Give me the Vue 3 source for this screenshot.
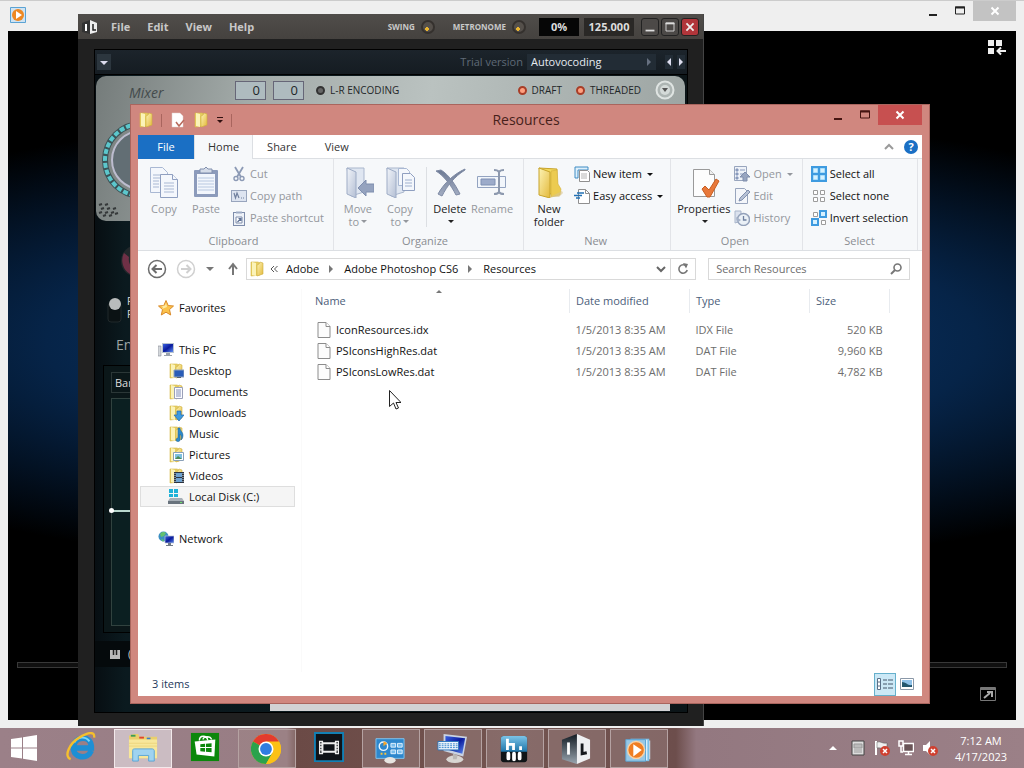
<script setup>
import { ref } from 'vue'

const activeTab = ref('Home')
const search = ref('')
const tabs = ['Home', 'Share', 'View']

const tree = [
  { name: 'Favorites', icon: 'star' },
  { name: 'This PC', icon: 'pc', gap: true },
  { name: 'Desktop', icon: 'desktop', child: true },
  { name: 'Documents', icon: 'documents', child: true },
  { name: 'Downloads', icon: 'downloads', child: true },
  { name: 'Music', icon: 'music', child: true },
  { name: 'Pictures', icon: 'pictures', child: true },
  { name: 'Videos', icon: 'videos', child: true },
  { name: 'Local Disk (C:)', icon: 'disk', child: true, selected: true },
  { name: 'Network', icon: 'network', gap: true }
]

const files = [
  { name: 'IconResources.idx', date: '1/5/2013 8:35 AM', type: 'IDX File', size: '520 KB' },
  { name: 'PSIconsHighRes.dat', date: '1/5/2013 8:35 AM', type: 'DAT File', size: '9,960 KB' },
  { name: 'PSIconsLowRes.dat', date: '1/5/2013 8:35 AM', type: 'DAT File', size: '4,782 KB' }
]

const crumbs = ['Adobe', 'Adobe Photoshop CS6', 'Resources']

const apps = [
  { name: 'Internet Explorer', icon: 'ie' },
  { name: 'File Explorer', icon: 'explorer', state: 'active' },
  { name: 'Store', icon: 'store' },
  { name: 'Chrome', icon: 'chrome', state: 'open' },
  { name: 'Movie editor', icon: 'film', state: 'dark' },
  { name: 'Control Panel', icon: 'control', state: 'open' },
  { name: 'On-Screen Keyboard', icon: 'keyboard', state: 'open' },
  { name: 'Mixer', icon: 'hw', state: 'open' },
  { name: 'Image Line', icon: 'il', state: 'open' },
  { name: 'Media Player', icon: 'wmp', state: 'open' }
]
</script>

<template>
  <div class="screen">
    <svg class="sprite" aria-hidden="true">
      <defs>
        <linearGradient id="gFolder" x1="0" y1="0" x2="1" y2="1">
          <stop offset="0" stop-color="#fdf3b4" /><stop offset="1" stop-color="#e3b93c" />
        </linearGradient>
        <linearGradient id="gPale" x1="0" y1="0" x2="1" y2="1">
          <stop offset="0" stop-color="#f2f5fa" /><stop offset="1" stop-color="#b4bfd4" />
        </linearGradient>
        <linearGradient id="gDelete" x1="0" y1="0" x2="0" y2="1">
          <stop offset="0" stop-color="#6d7a94" /><stop offset="1" stop-color="#a3adc2" />
        </linearGradient>
        <linearGradient id="gBlue" x1="0" y1="0" x2="0" y2="1">
          <stop offset="0" stop-color="#7cc4e8" /><stop offset="1" stop-color="#1d74a8" />
        </linearGradient>
        <linearGradient id="gCube" x1="0" y1="0" x2="0" y2="1">
          <stop offset="0" stop-color="#111a22" /><stop offset="1" stop-color="#9aa6b0" />
        </linearGradient>
        <linearGradient id="gScreen" x1="0" y1="0" x2="1" y2="1">
          <stop offset="0" stop-color="#3a62e0" /><stop offset="0.5" stop-color="#0a1a9c" /><stop offset="1" stop-color="#5d8cf0" />
        </linearGradient>
      </defs>

      <symbol id="i-folder" viewBox="0 0 16 16">
        <path d="M2 1h7l2 1v12l-9 1z" fill="#e6cd62" stroke="#d6b94c" stroke-width=".6" />
        <path d="M3 1l4 1v13l-4-1z" fill="#fbf3b8" />
        <path d="M8 4l2-1 1-2 3 1v11l-6 2z" fill="url(#gFolder)" stroke="#cfae3c" stroke-width=".6" />
      </symbol>
      <symbol id="i-open-folder" viewBox="0 0 32 32">
        <path d="M6 2l18 1v21l-10 6z" fill="#f3d95c" stroke="#c8a42c" />
        <path d="M18 5l6-1 1 14 3 5-1 6-9 2z" fill="#eccb50" stroke="#d3b03c" stroke-width=".6" />
        <path d="M6 2l11 4v26L6 29z" fill="url(#gFolder)" stroke="#c8a42c" />
        <path d="M17 31l6-3 6-3 1 2-4 4z" fill="#d9c48c" opacity=".6" />
      </symbol>
      <symbol id="i-file" viewBox="0 0 14 16">
        <path d="M1 .5h8l4 4v11H1z" fill="#fcfcfc" stroke="#8c8c8c" />
        <path d="M9 .5v4h4" fill="#fff" stroke="#8c8c8c" />
      </symbol>
      <symbol id="i-prop" viewBox="0 0 16 16">
        <path d="M2 1h8l3 3v11H2z" fill="#fff" stroke="#e3d0cc" stroke-width=".5" />
        <path d="M6 10l3 4 5-6" fill="none" stroke="#b86a5c" stroke-width="1.500" />
      </symbol>

      <symbol id="i-copy" viewBox="0 0 32 32">
        <g fill="#f4f7fc" stroke="#a9b8d3">
          <path d="M2.500 1.500h12l5 5v20h-17z" /><path d="M5 9h11M5 12h11M5 15h6M5 18h6M5 21h6" />
          <path d="M12.500 8.500h12l5 5v18h-17z" stroke="#8f9fc0" /><path d="M24.500 8.500v5h5" stroke="#8f9fc0" />
          <path d="M16 17h10M16 20h10M16 23h10M16 26h10" />
        </g>
      </symbol>
      <symbol id="i-paste" viewBox="0 0 32 32">
        <rect x="4" y="4" width="24" height="27" rx="1" fill="#8c9bbb" />
        <path d="M7 8h18v20H7z" fill="#f2f6fc" />
        <path d="M8 12h16M8 15h16M8 18h16M8 21h16M8 24h16" stroke="#b8c8e0" />
        <path d="M10 3h4l2-2 2 2h4v4H10z" fill="#d5dce8" stroke="#8190ae" />
      </symbol>
      <symbol id="i-cut" viewBox="0 0 16 16">
        <path d="M4 1l6 10M12 1L6 11" stroke="#8c9ab5" stroke-width="1.800" />
        <circle cx="5" cy="12.500" r="2" fill="none" stroke="#8c9ab5" stroke-width="1.400" />
        <circle cx="11" cy="12.500" r="2" fill="none" stroke="#8c9ab5" stroke-width="1.400" />
      </symbol>
      <symbol id="i-path" viewBox="0 0 16 16">
        <rect x=".5" y="2.500" width="15" height="11" fill="#dde4f0" stroke="#98a5bd" />
        <path d="M3 5l1.500 5L6 5l2 5M10 10h1M12 10h1" fill="none" stroke="#71809e" stroke-width="1.200" />
      </symbol>
      <symbol id="i-shortcut" viewBox="0 0 16 16">
        <rect x="2.500" y="2.500" width="11" height="13" fill="#eef2f8" stroke="#7e8dab" />
        <path d="M5 1.500h6v2H5z" fill="#9dabc4" />
        <path d="M5 7h6v6H5z" fill="#fff" stroke="#7e8dab" /><path d="M6.500 12l3-3M7.500 8.500h2.500V11" fill="none" stroke="#5d7196" stroke-width="1.200" />
      </symbol>
      <symbol id="i-move" viewBox="0 0 32 32">
        <path d="M5 2h17v24L9 30z" fill="#dfe6f1" stroke="#aab7cd" />
        <path d="M5 2l9 4v26l-9-4z" fill="url(#gPale)" stroke="#9eacc6" />
        <path d="M32 18h-8v-4l-8 8 8 8v-4h8z" fill="#95a3bf" stroke="#7f8eae" />
      </symbol>
      <symbol id="i-copyto" viewBox="0 0 32 32">
        <path d="M3 2h17v24L7 30z" fill="#dfe6f1" stroke="#aab7cd" />
        <path d="M3 2l9 4v26l-9-4z" fill="url(#gPale)" stroke="#9eacc6" />
        <path d="M14.500 2.500h8l3 3v14h-11z" fill="#f4f7fc" stroke="#a9b8d3" />
        <path d="M18.500 7.500h8l4 4v13h-12z" fill="#f4f7fc" stroke="#8f9fc0" />
        <path d="M21 14h7M21 17h7M21 20h7" stroke="#9fb0ce" />
      </symbol>
      <symbol id="i-delete" viewBox="0 0 32 32">
        <path d="M2 5l5-1c8 5 14 14 19 24l-4 1C17 19 10 10 2 5z" fill="url(#gDelete)" stroke="#7f8ba5" />
        <path d="M31 3C20 8 10 17 4 28l4 2C13 20 20 11 31 4z" fill="url(#gDelete)" stroke="#7f8ba5" />
      </symbol>
      <symbol id="i-rename" viewBox="0 0 32 32">
        <path d="M1.500 10.500h28v11h-28z" fill="#f2f6fb" stroke="#93a3c0" />
        <path d="M5 13h14v6H5z" fill="#9cabca" stroke="#7f90b3" />
        <path d="M18 4c2 0 4 0 5 2 1-2 3-2 5-2M23 6v20M18 28c2 0 4 0 5-2 1 2 3 2 5 2" fill="none" stroke="#8d99ae" stroke-width="2" />
      </symbol>
      <symbol id="i-newitem" viewBox="0 0 16 16">
        <path d="M1 1h13v3H4v8H1z" fill="#dff0fb" stroke="#3f8cc4" />
        <path d="M5.500 4.500h8l2 2v9h-10z" fill="#fff" stroke="#8f8f8f" />
        <path d="M7 8h6M7 10h6M7 12h6" stroke="#b5b5b5" />
      </symbol>
      <symbol id="i-easy" viewBox="0 0 16 16">
        <path d="M4.500 1.500h7l4 4v10h-11z" fill="#fff" stroke="#8f8f8f" /><path d="M11.500 1.500v4h4" fill="none" stroke="#8f8f8f" />
        <path d="M3 5h7M0 7.500h8M2 10h4" stroke="#2270b4" stroke-width="1.500" />
      </symbol>
      <symbol id="i-properties" viewBox="0 0 32 32">
        <path d="M5.500 3.500h16l5 5v22h-21z" fill="#fdfdfd" stroke="#9a9a9a" /><path d="M21.500 3.500v5h5" fill="#eee" stroke="#9a9a9a" />
        <path d="M14 23l3-3 4 4 7-11 3 2-9 16h-3z" fill="#e8783a" stroke="#c85e20" />
      </symbol>
      <symbol id="i-open" viewBox="0 0 16 16">
        <path d="M.5.500h12v14H.5z" fill="#eef2f8" stroke="#98a5bd" />
        <path d="M2 3h2v2H2zM6 4h5M2 7h2v2H2zM6 8h3M2 11h2v2H2z" fill="#8a9bbd" stroke="#8a9bbd" />
        <path d="M11 6l5 5h-3v4H9v-4H6z" fill="#97a5c0" stroke="#7e8dab" />
      </symbol>
      <symbol id="i-edit" viewBox="0 0 16 16">
        <path d="M1.500.500h9l3 3v12h-12z" fill="#f4f6fa" stroke="#98a5bd" />
        <path d="M5 13l1-3 8-8 2 2-8 8z" fill="#b6c1d5" stroke="#8190ae" />
      </symbol>
      <symbol id="i-history" viewBox="0 0 16 16">
        <path d="M1 1h6v10l-6 2z" fill="#dbe2ee" stroke="#aab6cb" />
        <circle cx="9.500" cy="9.500" r="6" fill="#eaf0f6" stroke="#93a1ba" stroke-width="1.500" />
        <path d="M9.500 6v4h3" fill="none" stroke="#6f80a0" stroke-width="1.300" /><path d="M2 7l1 6 4-3" fill="#a5b2c8" />
      </symbol>
      <symbol id="i-all" viewBox="0 0 16 16">
        <path d="M0 0h16v16H0z" fill="#3e9be0" />
        <path d="M2.500 2.500h4v4h-4zM9.500 2.500h4v4h-4zM2.500 9.500h4v4h-4zM9.500 9.500h4v4h-4z" fill="#d6f1ff" stroke="#a9defa" />
      </symbol>
      <symbol id="i-none" viewBox="0 0 16 16">
        <path d="M2.500 2.500h4v4h-4zM9.500 2.500h4v4h-4zM2.500 9.500h4v4h-4zM9.500 9.500h4v4h-4z" fill="#fff" stroke="#9c9c9c" />
      </symbol>
      <symbol id="i-invert" viewBox="0 0 16 16">
        <path d="M2.500 2.500h4v4h-4zM10.500 10.500h4v4h-4z" fill="#fff" stroke="#9c9c9c" />
        <path d="M9 1h6v6H9zM1 9h6v6H1z" fill="#d6f1ff" stroke="#3e9be0" stroke-width="2" />
      </symbol>

      <symbol id="i-star" viewBox="0 0 16 16">
        <path d="M8 .5l2.200 5 5.300.5-4 3.600 1.200 5.400L8 12.200 3.300 15l1.200-5.400L.5 6l5.300-.5z" fill="#fbc24a" stroke="#d98a2b" />
        <path d="M8 3l1 4-5 2 1-2-2-1 4-.5z" fill="#fde9a0" />
      </symbol>
      <symbol id="i-pc" viewBox="0 0 16 16">
        <path d="M0 4h3v10H0z" fill="#d4d8dc" stroke="#868c94" stroke-width=".6" />
        <path d="M4 1h12v10H4z" fill="#b9c4d0" /><path d="M5 2h10v8H5z" fill="url(#gScreen)" />
        <path d="M8 11h4v2h2v1H6v-1h2z" fill="#9ba3ad" />
      </symbol>
      <symbol id="i-desktop" viewBox="0 0 16 16">
        <use href="#i-folder" /><path d="M6 7h10v7H6z" fill="#2a5db8" stroke="#8fa2bd" /><path d="M9 14h4v1H9z" fill="#56606e" />
      </symbol>
      <symbol id="i-documents" viewBox="0 0 16 16">
        <use href="#i-folder" /><path d="M6.500 3.500h8v11h-8z" fill="#fbfbff" stroke="#9aa0b8" /><path d="M8 6h5M8 8h5M8 10h5M8 12h5" stroke="#8390b8" />
      </symbol>
      <symbol id="i-downloads" viewBox="0 0 16 16">
        <use href="#i-folder" /><path d="M9 6h4v4h3l-5 6-5-6h3z" fill="#3d9ae0" stroke="#2468ae" stroke-width=".7" />
      </symbol>
      <symbol id="i-music" viewBox="0 0 16 16">
        <use href="#i-folder" /><path d="M10 2h2c0 3 3 4 3 7s-1 4-2 5c1-3 0-5-1-6v6c0 2-4 2-4 0s2-2 2-2z" fill="#2b8acb" stroke="#1d5f96" stroke-width=".5" />
      </symbol>
      <symbol id="i-pictures" viewBox="0 0 16 16">
        <use href="#i-folder" /><path d="M5.500 5.500h10v8h-10z" fill="#fff" stroke="#8aa0b8" /><path d="M7 7h7v5H7z" fill="#7ec0e0" /><path d="M7 12l3-3 4 3z" fill="#4c8b56" />
      </symbol>
      <symbol id="i-videos" viewBox="0 0 16 16">
        <use href="#i-folder" /><path d="M6 4h10v11H6z" fill="#2c3440" /><path d="M8 5h6v4H8zM8 10h6v4H8z" fill="#6ea2d0" />
        <path d="M7 5v10M15 5v10" stroke="#d8dfe6" stroke-dasharray="1 1" />
      </symbol>
      <symbol id="i-disk" viewBox="0 0 16 16">
        <path d="M1 0h4v4H1zM6 0h4v4H6zM1 5h4v3H1zM6 5h4v3H6z" fill="#1fb2d8" />
        <path d="M2 9h12l2 3v3H0v-3z" fill="#a8b0b8" /><path d="M0 12h16v3H0z" fill="#69737d" /><path d="M12 13h2v1h-2z" fill="#6de06c" />
      </symbol>
      <symbol id="i-network" viewBox="0 0 16 16">
        <circle cx="5.500" cy="5.500" r="5" fill="#3a8fc2" /><path d="M2 3c2-3 5-2 6-1L6 5 3 6zM3 8l3 1-1 2z" fill="#63c070" />
        <path d="M7 5h9v7H7z" fill="url(#gScreen)" stroke="#b7c2ce" stroke-width=".7" /><path d="M10 12h3v2h2v1H8v-1h2z" fill="#707a86" />
      </symbol>

      <symbol id="i-start" viewBox="0 0 28 28">
        <path d="M1 5l11-1.600V13.500H1zM13 3.200L27 1v12.500H13zM1 14.500h11v10L1 23zM13 14.500h14V27l-14-2.200z" fill="#fff" />
      </symbol>
      <symbol id="i-ie" viewBox="0 0 32 32">
        <path d="M27 20c-4 10-20 8-19-4S26 3 27 15v2H11" fill="none" stroke="#1e8fd4" stroke-width="6" />
        <path d="M9 11c3-6 12-7 16-1" fill="none" stroke="#7cd6f8" stroke-width="2" />
        <path d="M5 29C-3 26 4 12 14 6S31-1 30 6" fill="none" stroke="#f5bf2d" stroke-width="2.500" />
      </symbol>
      <symbol id="i-explorer" viewBox="0 0 32 32">
        <path d="M1 4l5-2h5l1 3h19v23H2z" fill="#e9cf6b" />
        <path d="M3 3h5v2H3z" fill="#3c9e55" /><path d="M12 5h5v2h-5z" fill="#e0452f" /><path d="M20 6h4v2h-4z" fill="#3c7ccb" />
        <path d="M1 8h30v20H1z" fill="#f7e79b" /><path d="M1 12h30M1 15h30" stroke="#ecd47c" />
        <path d="M5 31V20c0-2 1-2 2-2h19c1 0 2 1 2 2v11h-6v-6H11v6z" fill="#9fd3f0" stroke="#58a5d6" />
      </symbol>
      <symbol id="i-store" viewBox="0 0 32 32">
        <path d="M1 1h30v30H1z" fill="#0b870b" />
        <path d="M10 9c0-6 8-6 9 0M14 8c0-4 8-4 9 0" fill="none" stroke="#fff" stroke-width="1.500" /><path d="M5 10l22-2-1 18-19-2z" fill="#fff" />
        <path d="M11 13l5-.5V16h-5zM17 12.400l6-.4v4h-6zM11 17h5v4l-5-.5zM17 17h6v4.600l-6-.6z" fill="#0b870b" />
      </symbol>
      <symbol id="i-chrome" viewBox="0 0 32 32">
        <circle cx="16" cy="16" r="16" fill="#fbc116" />
        <path d="M16 16L2.140 8A16 16 0 0 1 29.860 8z" fill="#e33b2e" /><path d="M16 16L2.140 8A16 16 0 0 0 16 32l7-12z" fill="#2ba24c" />
        <path d="M16 8h13.860A16 16 0 0 1 16 32l7-12z" fill="#fbc116" />
        <circle cx="16" cy="16" r="8" fill="#fff" /><circle cx="16" cy="16" r="6.300" fill="#2f7de1" />
      </symbol>
      <symbol id="i-film" viewBox="0 0 32 32">
        <path d="M1 1h30v30H1z" fill="#101318" stroke="#1380b4" stroke-width="2" />
        <path d="M6 10h3v13H6zM23 10h3v13h-3z" fill="none" stroke="#eee" stroke-width="1.400" /><path d="M6 13h3M6 16h3M6 19h3M23 13h3M23 16h3M23 19h3" stroke="#eee" stroke-width="1.400" />
        <path d="M9 12h14v9H9z" fill="none" stroke="#eee" stroke-width="2" />
      </symbol>
      <symbol id="i-control" viewBox="0 0 32 32">
        <path d="M1 5h30v21H1z" fill="#2d87cd" stroke="#83c4ee" /><circle cx="9" cy="13" r="4.500" fill="none" stroke="#e9f5ff" stroke-width="1.500" />
        <path d="M9 13V8a5 5 0 0 1 4 2z" fill="#f3a52b" /><path d="M17 10h5v4h-5zM24 10h5v4h-5zM17 17h5v4h-5zM24 17h5v4h-5z" fill="#79bdec" stroke="#e4f3ff" />
        <path d="M6 21h2M10 21h2" stroke="#f7c33d" stroke-width="2" /><ellipse cx="16" cy="28" rx="6" ry="3.500" fill="#e7e5e1" />
      </symbol>
      <symbol id="i-keyboard" viewBox="0 0 32 32">
        <path d="M7 0l25 3-4 21L7 18z" fill="#c9d3e2" /><path d="M9 2l21 2.500L27 21 9 16z" fill="url(#gScreen)" />
        <path d="M1 8h22v9H1z" fill="#eef4fb" stroke="#2c74ba" /><path d="M2 10.500h20M2 12.500h20M2 14.500h20" stroke="#3384cc" stroke-dasharray="2 1" />
        <ellipse cx="19" cy="27" rx="9" ry="4" fill="#d8d6d2" /><path d="M17 21l5 1-1 5h-4z" fill="#bab8b5" />
      </symbol>
      <symbol id="i-hw" viewBox="0 0 32 32">
        <rect x="2" y="2" width="28" height="28" rx="3" fill="#101417" /><path d="M5 2h22q3 0 3 3v14H2V5q0-3 3-3z" fill="url(#gBlue)" />
        <path d="M9 5v12M15.500 17v-6h-5M23 13v4" stroke="#fff" stroke-width="3" fill="none" />
        <path d="M10 21v5M16 21v6M22 21v5" stroke="#fff" stroke-width="4" stroke-linecap="round" />
      </symbol>
      <symbol id="i-il" viewBox="0 0 32 32">
        <path d="M1 6l16-6v32L1 27z" fill="url(#gCube)" /><path d="M17 0l14 6v20l-14 6z" fill="#eef0f2" />
        <path d="M8 9v13" stroke="#fff" stroke-width="3" /><path d="M22.500 10v11l5-1" fill="none" stroke="#15191d" stroke-width="3" />
      </symbol>
      <symbol id="i-wmp" viewBox="0 0 32 32">
        <path d="M8 5h20v24H8z" fill="#7cc0e8" /><path d="M24 6h2v22h-2zM28 7h1v20h-1z" fill="#d9effb" />
        <path d="M3 6h21v23H3z" fill="#98c8e6" stroke="#5ba4d3" /><circle cx="14" cy="17" r="9" fill="#ef7d22" stroke="#f9d2a6" stroke-width="1.500" /><path d="M11 11l9 6-9 7z" fill="#fff" />
      </symbol>
    </svg>

    <main class="desktop">
      <!-- media player -->
      <section class="player">
        <header class="player-bar">
          <svg class="player-logo" viewBox="0 0 16 16"><path d="M.5.500h15v15H.5z" fill="#cfe3f2" stroke="#5ba3d4" /><circle cx="8" cy="8" r="6" fill="#ee8822" /><path d="M6 4l6 4-6 4z" fill="#fff" /></svg>
          <div class="player-controls">
            <button aria-label="Minimize"><svg viewBox="0 0 12 12"><path d="M2 10h8" stroke="#222" stroke-width="2" /></svg></button>
            <button aria-label="Maximize"><svg viewBox="0 0 12 12"><path d="M1.500 2h9v7h-9z" fill="none" stroke="#222" /><path d="M1 2.500h10" stroke="#222" stroke-width="2" /></svg></button>
            <button class="player-close" aria-label="Close"><svg viewBox="0 0 12 12"><path d="M2.500 2.500l7 7M9.500 2.500l-7 7" stroke="#fff" stroke-width="2" /></svg></button>
          </div>
        </header>
        <div class="player-body">
          <button class="switch" aria-label="Switch to library"><svg viewBox="0 0 20 18"><path d="M1 1h6v6H1zM9 1h6v6H9zM1 9h6v6H1z" fill="#eee" /><path d="M19 12h-8M14 8.500L10.500 12l3.500 3.500" fill="none" stroke="#eee" stroke-width="2" /></svg></button>
          <div class="seek"></div>
          <button class="full" aria-label="Full screen"><svg viewBox="0 0 16 14"><path d="M.5.500h15v13H.5z" fill="none" stroke="#777" /><path d="M.5 2h15" stroke="#777" stroke-width="2" /><path d="M4 11l6-5M7 5h5v5" fill="none" stroke="#aaa" stroke-width="2" /></svg></button>
        </div>
      </section>

      <!-- audio workstation -->
      <section class="daw">
        <header class="daw-bar">
          <svg class="daw-logo" viewBox="0 0 16 16"><path d="M0 4l8-3v14l-8-2z" fill="#333" /><path d="M8 1l7 3v9l-7 2z" fill="#eee" /><path d="M4 5v7" stroke="#fff" stroke-width="2" /><path d="M11 5v6h3" fill="none" stroke="#222" stroke-width="1.500" /></svg>
          <nav class="daw-menu"><a href="#">File</a><a href="#">Edit</a><a href="#">View</a><a href="#">Help</a></nav>
          <span class="tiny">SWING</span><i class="pot"></i>
          <span class="tiny metro">METRONOME</span><i class="pot"></i>
          <output class="lcd">0%</output>
          <output class="lcd tempo">125.000</output>
          <div class="daw-controls">
            <button aria-label="Minimize"><svg viewBox="0 0 18 18"><path d="M4 13h10" stroke="#ddd" stroke-width="2" /></svg></button>
            <button aria-label="Maximize"><svg viewBox="0 0 18 18"><path d="M4.500 4.500h9v9h-9z" fill="none" stroke="#ddd" /><path d="M4 5h10" stroke="#ddd" stroke-width="2" /></svg></button>
            <button class="red" aria-label="Close"><svg viewBox="0 0 18 18"><path d="M5 5l8 8M13 5l-8 8" stroke="#eee" stroke-width="2" /></svg></button>
          </div>
        </header>
        <div class="plugin">
          <div class="preset-bar">
            <button class="drop" aria-label="Options"><svg viewBox="0 0 14 16"><path d="M3 7h8l-4 4z" fill="#dde" /></svg></button>
            <span class="trial">Trial version</span>
            <button class="preset">Autovocoding<svg viewBox="0 0 6 8"><path d="M1 0v8l4-4z" fill="#667080" /></svg></button>
            <button class="step" aria-label="Previous"><svg viewBox="0 0 6 8"><path d="M5 0v8L1 4z" fill="#dde" /></svg></button>
            <button class="step" aria-label="Next"><svg viewBox="0 0 6 8"><path d="M1 0v8l4-4z" fill="#dde" /></svg></button>
          </div>
          <div class="mixer">
            <div class="mixer-top">
              <em>Mixer</em>
              <output class="num">0</output><output class="num">0</output>
              <span class="led unlit">L-R ENCODING</span>
              <span class="led draft">DRAFT</span>
              <span class="led">THREADED</span>
              <button class="round" aria-label="More"><svg viewBox="0 0 20 20"><circle cx="10" cy="10" r="8.500" fill="#adb5b3" stroke="#dfe4e2" stroke-width="2" /><circle cx="10" cy="10" r="5" fill="#d4dad8" /><path d="M7 8h6l-3 4z" fill="#555" /></svg></button>
            </div>
            <svg class="dial" viewBox="0 0 80 80">
              <circle cx="40" cy="40" r="36" fill="none" stroke="#3c5256" stroke-width="6" />
              <circle cx="40" cy="40" r="36" fill="none" stroke="#5cc7cc" stroke-width="4" stroke-dasharray="5 2" />
              <circle cx="40" cy="40" r="29" fill="#626e74" stroke="#bcbcce" stroke-width="2" />
            </svg>
            <svg class="grille" viewBox="0 0 24 14"><path d="M1 2l3-1M7 2l3-1M3 6l3-1M9 6l3-1M15 6l3-1M1 10l3-1M7 10l3-1M13 10l3-1M5 13l3-1M11 13l3-1M17 11l3-1" stroke="#35393a" stroke-width="2" /></svg>
          </div>
          <div class="voice">
            <svg class="voice-knob" viewBox="0 0 36 36"><circle cx="18" cy="18" r="16" fill="#22282b" /><path d="M5 10a16 16 0 0 0 6 21l4-5a12 12 0 0 1-5-12z" fill="#6f3046" /></svg>
            <svg class="toggle" viewBox="0 0 16 26"><rect x="1" y="6" width="13" height="19" rx="3" fill="#0b1214" stroke="#20282a" /><circle cx="8" cy="7" r="6" fill="#b9bcbc" /></svg>
            <span class="voice-label">R<br />R</span>
          </div>
          <h2>Envelope</h2>
          <div class="bands">
            <div class="band-name">Bandwidth</div>
            <svg class="graph" preserveAspectRatio="none" viewBox="0 0 560 228"><path d="M.5.500h559v227H.5z" fill="#0b1f21" stroke="#31423f" /><path d="M0 113h560" stroke="#b9d8ce" stroke-width="2" /></svg>
            <i class="node"></i>
          </div>
          <div class="keys"><svg viewBox="0 0 10 10"><path d="M0 1h10v9H0z" fill="#bbb" /><path d="M3.500 1v5M6.500 1v5" stroke="#222" stroke-width="1.500" /></svg><span>( )</span></div>
          <div class="piano"></div>
        </div>
      </section>

      <!-- file explorer -->
      <section class="explorer">
        <header class="title">
          <div class="quick">
            <svg class="ic"><use href="#i-folder" /></svg><i></i>
            <svg class="ic"><use href="#i-prop" /></svg>
            <svg class="ic"><use href="#i-folder" /></svg>
            <svg class="quick-arrow" viewBox="0 0 8 8"><path d="M1 1.500h6" stroke="#301010" /><path d="M1 4h6L4 7z" fill="#301010" /></svg><i></i>
          </div>
          <h1>Resources</h1>
          <div class="controls">
            <button aria-label="Minimize"><svg viewBox="0 0 12 12"><path d="M2 10h8" stroke="#451512" stroke-width="2" /></svg></button>
            <button aria-label="Maximize"><svg viewBox="0 0 12 12"><path d="M1.500 2h9v7h-9z" fill="none" stroke="#451512" /><path d="M1 2.500h10" stroke="#451512" stroke-width="2" /></svg></button>
            <button class="close" aria-label="Close"><svg viewBox="0 0 12 12"><path d="M2.500 2.500l7 7M9.500 2.500l-7 7" stroke="#fff" stroke-width="2" /></svg></button>
          </div>
        </header>

        <div class="content">
          <nav class="tabs">
            <button class="tab-file">File</button>
            <button v-for="t in tabs" :key="t" :class="{ on: t === activeTab }" @click="activeTab = t">{{ t }}</button>
            <svg class="fold" viewBox="0 0 10 8"><path d="M1 6l4-4 4 4" fill="none" stroke="#9a9a9a" stroke-width="2" /></svg>
            <button class="help" aria-label="Help">?</button>
          </nav>

          <div class="ribbon">
            <div class="group">
              <div class="tools">
                <button class="big off"><svg><use href="#i-copy" /></svg>Copy</button>
                <button class="big off"><svg><use href="#i-paste" /></svg>Paste</button>
                <div class="smalls">
                  <button class="off"><svg><use href="#i-cut" /></svg>Cut</button>
                  <button class="off"><svg><use href="#i-path" /></svg>Copy path</button>
                  <button class="off"><svg><use href="#i-shortcut" /></svg>Paste shortcut</button>
                </div>
              </div>
              <span class="caption">Clipboard</span>
            </div>
            <div class="group organize">
              <div class="tools">
                <button class="big off"><svg><use href="#i-move" /></svg>Move<span>to<b class="arr"></b></span></button>
                <button class="big off"><svg><use href="#i-copyto" /></svg>Copy<span>to<b class="arr"></b></span></button>
                <i class="sep"></i>
                <button class="big"><svg><use href="#i-delete" /></svg>Delete<span><b class="arr"></b></span></button>
                <button class="big off"><svg><use href="#i-rename" /></svg>Rename</button>
              </div>
              <span class="caption">Organize</span>
            </div>
            <div class="group new">
              <div class="tools">
                <button class="big"><svg><use href="#i-open-folder" /></svg>New<span>folder</span></button>
                <div class="smalls">
                  <button><svg><use href="#i-newitem" /></svg>New item<b class="arr"></b></button>
                  <button><svg><use href="#i-easy" /></svg>Easy access<b class="arr"></b></button>
                </div>
              </div>
              <span class="caption">New</span>
            </div>
            <div class="group open">
              <div class="tools">
                <button class="big"><svg><use href="#i-properties" /></svg>Properties<span><b class="arr"></b></span></button>
                <div class="smalls">
                  <button class="off"><svg><use href="#i-open" /></svg>Open<b class="arr"></b></button>
                  <button class="off"><svg><use href="#i-edit" /></svg>Edit</button>
                  <button class="off"><svg><use href="#i-history" /></svg>History</button>
                </div>
              </div>
              <span class="caption">Open</span>
            </div>
            <div class="group select">
              <div class="tools">
                <div class="smalls">
                  <button><svg><use href="#i-all" /></svg>Select all</button>
                  <button><svg><use href="#i-none" /></svg>Select none</button>
                  <button><svg><use href="#i-invert" /></svg>Invert selection</button>
                </div>
              </div>
              <span class="caption">Select</span>
            </div>
          </div>

          <div class="address-row">
            <button class="nav-btn" aria-label="Back"><svg viewBox="0 0 20 20"><circle cx="10" cy="10" r="8.500" fill="none" stroke="#6c6c6c" stroke-width="1.500" /><path d="M15 10H6M9.500 6L5.500 10l4 4" fill="none" stroke="#6c6c6c" stroke-width="2" /></svg></button>
            <button class="nav-btn" aria-label="Forward"><svg viewBox="0 0 20 20"><circle cx="10" cy="10" r="8.500" fill="none" stroke="#d0d0d0" stroke-width="1.500" /><path d="M5 10h9M10.500 6l4 4-4 4" fill="none" stroke="#d0d0d0" stroke-width="2" /></svg></button>
            <svg class="recent" viewBox="0 0 8 8"><path d="M0 2h8L4 6z" fill="#777" /></svg>
            <svg class="up" viewBox="0 0 12 14"><path d="M6 13V3M2 7l4-5 4 5" fill="none" stroke="#777" stroke-width="2" /></svg>
            <div class="address">
              <svg class="ic"><use href="#i-folder" /></svg>
              <svg class="chev" viewBox="0 0 8 8"><path d="M4 1L1 4l3 3M7.500 1l-3 3 3 3" fill="none" stroke="#555" /></svg>
              <template v-for="(c, i) in crumbs" :key="c">
                <svg v-if="i" class="crumb-arrow" viewBox="0 0 4 8"><path d="M0 0v8l4-4z" fill="#777" /></svg>
                <a href="#">{{ c }}</a>
              </template>
              <svg class="down" viewBox="0 0 10 8"><path d="M1 2l4 4 4-4" fill="none" stroke="#666" stroke-width="2" /></svg>
              <button class="refresh" aria-label="Refresh"><svg viewBox="0 0 12 12"><path d="M9.500 3.500A4.200 4.200 0 1 0 10.200 7" fill="none" stroke="#777" stroke-width="1.600" /><path d="M6 0l5 1-2 4.500z" fill="#777" /></svg></button>
            </div>
            <label class="search">
              <input v-model="search" type="text" placeholder="Search Resources" aria-label="Search Resources" />
              <svg viewBox="0 0 12 12"><circle cx="7.500" cy="4.500" r="3.500" fill="none" stroke="#777" stroke-width="1.600" /><path d="M5 7L1 11" stroke="#777" stroke-width="2" /></svg>
            </label>
          </div>

          <div class="panes">
            <nav class="tree">
              <a v-for="n in tree" :key="n.name" href="#" :class="{ child: n.child, gap: n.gap, selected: n.selected }">
                <svg class="ic"><use :href="'#i-' + n.icon" /></svg>{{ n.name }}
              </a>
            </nav>
            <div class="list">
              <table>
                <colgroup><col class="c-name" /><col class="c-mid" /><col class="c-mid" /><col class="c-size" /></colgroup>
                <thead>
                  <tr><th>Name<svg class="sort" viewBox="0 0 8 4"><path d="M0 4h8L4 0z" fill="#777" /></svg></th><th>Date modified</th><th>Type</th><th>Size</th></tr>
                </thead>
                <tbody>
                  <tr v-for="f in files" :key="f.name">
                    <td><div class="file"><svg><use href="#i-file" /></svg>{{ f.name }}</div></td>
                    <td>{{ f.date }}</td>
                    <td>{{ f.type }}</td>
                    <td class="size">{{ f.size }}</td>
                  </tr>
                </tbody>
              </table>
            </div>
          </div>

          <footer class="status">
            <span>{{ files.length }} items</span>
            <button class="view on" aria-label="Details view"><svg viewBox="0 0 16 12"><path d="M.5.500h3v11h-3zM.5 4h3M.5 8h3" fill="#fff" stroke="#5b7088" /><path d="M6 2h4M11 2h5M6 6h4M11 6h5M6 10h4M11 10h5" stroke="#44566b" /></svg></button>
            <button class="view" aria-label="Large thumbnails"><svg viewBox="0 0 16 12"><path d="M1.500.500h13v11h-13z" fill="#fff" stroke="#8a98a8" /><path d="M3 2h10v7H3z" fill="#8fc1e8" /><path d="M3 4c4 0 6 4 10 3v2H3z" fill="#23566d" /></svg></button>
          </footer>
        </div>
      </section>

      <svg class="cursor" viewBox="0 0 12 20"><path d="M.5.500v16l4-3.500 2.500 6 2.500-1-2.500-5.500h5z" fill="#fff" stroke="#222" /></svg>
    </main>

    <footer class="taskbar">
      <button class="start" aria-label="Start"><svg><use href="#i-start" /></svg></button>
      <button v-for="a in apps" :key="a.name" class="app" :class="a.state" :aria-label="a.name">
        <svg><use :href="'#i-' + a.icon" /></svg>
      </button>
      <div class="tray">
        <svg viewBox="0 0 16 16"><path d="M4 10h8L8 6z" fill="#fff" /></svg>
        <svg viewBox="0 0 16 16"><path d="M2 1h12v14H2z" fill="#ddd" stroke="#444" /><path d="M4 4h8v4H4zM4 10h8M4 12h8" fill="#bbb" stroke="#999" /></svg>
        <svg viewBox="0 0 16 16"><path d="M2 1v14" stroke="#fff" stroke-width="2" /><path d="M3 2c4-1 5 2 10 1v6c-4 1-6-2-10-1z" fill="#eee" stroke="#555" stroke-width=".5" /><circle cx="11" cy="11" r="5" fill="#cf4030" /><path d="M9 9l4 4M13 9l-4 4" stroke="#fff" stroke-width="1.500" /></svg>
        <svg viewBox="0 0 16 16"><path d="M5.500 3.500h10v8h-10z" fill="#6b5558" stroke="#fff" stroke-width="1.500" /><path d="M7 14.500h7M10.500 12v2M1 1h4v5H1zM3 6v6h2" fill="none" stroke="#fff" stroke-width="1.500" /></svg>
        <svg viewBox="0 0 16 16"><path d="M1 5h3l4-4v14l-4-4H1z" fill="#fff" /><circle cx="11" cy="11" r="5" fill="#cf4030" /><path d="M9 9l4 4M13 9l-4 4" stroke="#fff" stroke-width="1.500" /></svg>
      </div>
      <time class="clock">7:12 AM<br />4/17/2023</time>
    </footer>
  </div>
</template>

<style>
body {
  margin: 0;
  background: #000;
}
</style>

<style scoped>
.screen {
  display: flex;
  flex-direction: column;
  min-height: 100vh;
  font: 11px/16px "Open Sans", "Noto Sans", sans-serif;
  color: #111;
  overflow: hidden;
}

button {
  padding: 0;
  border: 0;
  background: none;
  font: inherit;
  color: inherit;
}

a {
  color: inherit;
  text-decoration: none;
}

svg {
  display: block;
  flex: none;
}

.sprite {
  position: absolute;
  width: 0;
  height: 0;
}

.ic {
  width: 16px;
  height: 16px;
}

.desktop {
  position: relative;
  flex: 1;
}

/* media player */
.player {
  position: absolute;
  inset: 0;
  display: flex;
  flex-direction: column;
  padding: 0 8px 8px;
  background: #efefef;
  border-top: 1px solid #ccc;
  box-sizing: border-box;
}

.player-bar {
  display: flex;
  justify-content: space-between;
  height: 30px;
}

.player-logo {
  width: 16px;
  height: 16px;
  margin: 6px 2px;
}

.player-controls {
  display: flex;
  height: 20px;
}

.player-controls button {
  display: grid;
  place-items: center;
  width: 27px;
}

.player-controls svg {
  width: 12px;
  height: 12px;
}

.player-controls .player-close {
  width: 43px;
  background: #c3c3c3;
}

.player-body {
  flex: 1;
  display: flex;
  flex-direction: column;
  align-items: flex-end;
  background: radial-gradient(ellipse 84% 34% at 50% 45%, #0c3f7c, #062448 55%, #000 100%);
}

.switch {
  width: 20px;
  margin: 8px 9px auto;
}

.seek {
  align-self: stretch;
  height: 4px;
  margin: 0 9px 19px;
  border: 1px solid #383838;
  background: #101010;
}

.full {
  width: 16px;
  margin: 0 20px 19px;
}

/* audio workstation */
.daw {
  position: absolute;
  inset: 14px 320px 2px 78px;
  display: flex;
  flex-direction: column;
  background: #202020;
  color: #c8c8c8;
  border-right: 1px solid #444;
  box-sizing: border-box;
}

.daw-bar {
  display: flex;
  align-items: center;
  height: 25px;
  padding: 0 4px;
  background: linear-gradient(#504d4a, #45423f);
}

.daw-logo {
  width: 16px;
}

.daw-menu {
  display: flex;
  gap: 17px;
  margin: 0 auto 0 13px;
  font-weight: 700;
}

.tiny {
  font-size: 8px;
  font-weight: 700;
}

.metro {
  margin-left: 18px;
}

.pot {
  width: 10px;
  height: 10px;
  margin-left: 6px;
  border: 2px solid #35312e;
  border-radius: 50%;
  background: radial-gradient(circle at 40% 70%, #e8b430 2px, #55504b 2px);
}

.lcd {
  width: 40px;
  margin-left: 13px;
  background: #060606;
  text-align: center;
  line-height: 18px;
  font-weight: 700;
  color: #ddd;
}

.tempo {
  width: 50px;
  margin-left: 5px;
  background: #2a2826;
}

.daw-controls {
  display: flex;
  gap: 2px;
  margin-left: 7px;
}

.daw-controls button {
  width: 18px;
  height: 18px;
  border: 1px solid #222;
  border-radius: 3px;
  background: #4c4947;
}

.daw-controls .red {
  background: #b0353a;
}

.plugin {
  flex: 1;
  display: flex;
  flex-direction: column;
  margin: 10px 15px 13px 16px;
  border: 1px solid #000;
  background: linear-gradient(90deg, #070e12, #0b1a1f 30px, #0c1518);
  overflow: hidden;
}

.preset-bar {
  display: flex;
  align-items: center;
  gap: 4px;
  height: 24px;
  padding: 0 2px;
  background: linear-gradient(#1c242b, #151c22);
  border-bottom: 1px solid #000;
}

.drop {
  width: 14px;
  height: 16px;
  margin-right: auto;
  background: #2c363e;
}

.trial {
  color: #5f6a76;
}

.preset {
  display: flex;
  align-items: center;
  justify-content: space-between;
  width: 129px;
  padding: 0 4px;
  margin-right: 5px;
  background: #222c35;
  color: #e5eaf0;
}

.preset svg,
.step svg {
  width: 6px;
  height: 8px;
}

.step {
  padding: 3px 1px;
  background: #222c35;
}

.mixer {
  height: 145px;
  margin: 1px 2px 0 1px;
  border-radius: 10px;
  background: linear-gradient(100deg, #757c7b, #a2aaa8 25%, #bac2c0 55%, #a9b1af 80%, #9ba3a1);
}

.mixer-top {
  display: flex;
  align-items: center;
  height: 28px;
  padding: 0 10px 0 33px;
  color: #1f2729;
  font-size: 10px;
}

.mixer-top em {
  width: 106px;
  font: italic 14px "Open Sans", sans-serif;
  color: #444b4c;
  padding-top: 4px;
}

.num {
  width: 24px;
  margin-right: 7px;
  padding-right: 5px;
  border: 1px solid #667;
  background: #aebbbf;
  font: 13px/17px "Open Sans", sans-serif;
  text-align: right;
}

.led {
  display: flex;
  align-items: center;
  gap: 5px;
  margin-right: 14px;
}

.led::before {
  content: '';
  width: 5px;
  height: 5px;
  border: 2px solid #a83e28;
  border-radius: 50%;
  background: #ffa080;
}

.led.unlit {
  margin-left: 5px;
}

.led.unlit::before {
  border-color: #333;
  background: #666;
}

.led.draft {
  margin-left: auto;
}

.round {
  width: 20px;
}

.dial {
  width: 80px;
  height: 80px;
  margin: 16px 0 0 5px;
}

.grille {
  width: 24px;
  height: 14px;
  margin: 3px 0 0 2px;
}

.voice {
  display: grid;
  grid-template-columns: 20px 1fr;
  padding: 22px 0 0 12px;
}

.voice-knob {
  grid-column: 1 / -1;
  width: 36px;
  height: 36px;
  margin-left: 12px;
}

.toggle {
  width: 16px;
  margin-top: 18px;
}

.voice-label {
  margin-top: 16px;
  color: #ddd;
  font-size: 10px;
  line-height: 13px;
}

.daw h2 {
  margin: 12px 0 10px 21px;
  font-size: 14px;
  line-height: 20px;
  font-weight: 400;
  color: #9da4a5;
}

.bands {
  position: relative;
  height: 260px;
  margin-left: 8px;
  padding: 6px 7px 0;
  border: 1px solid #000;
  background: #0b1719;
}

.band-name {
  height: 19px;
  padding-left: 3px;
  border: 1px solid #2b3737;
  line-height: 19px;
  color: #ddd;
}

.graph {
  width: 100%;
  height: 228px;
  margin-top: 5px;
}

.node {
  position: absolute;
  left: 5px;
  top: 142px;
  width: 5px;
  height: 5px;
  border-radius: 50%;
  background: #fff;
}

.keys {
  display: flex;
  align-items: center;
  gap: 8px;
  height: 26px;
  margin-top: 8px;
  padding-left: 15px;
  background: #050a0c;
}

.keys svg {
  width: 10px;
}

.piano {
  width: 400px;
  height: 8px;
  margin: auto 0 1px 175px;
  background: #d2d2d4;
}

/* file explorer */
.explorer {
  position: absolute;
  inset: 104px 94px 24px 130px;
  display: flex;
  flex-direction: column;
  padding: 0 7px 7px;
  border: 1px solid #a9655e;
  background: #d0877f;
  box-sizing: border-box;
}

.title {
  display: flex;
  justify-content: space-between;
  height: 30px;
}

.quick,
.controls {
  display: flex;
  flex: 1;
}

.quick {
  align-items: center;
  gap: 7px;
}

.quick i {
  width: 1px;
  height: 13px;
  margin-right: 1px;
  background: #a9655e;
}

.quick-arrow {
  width: 8px;
}

.title h1 {
  margin: 0;
  padding-right: 8px;
  font-size: 14px;
  line-height: 30px;
  font-weight: 400;
  color: #471f1b;
}

.controls {
  justify-content: flex-end;
  height: 20px;
}

.controls button {
  display: grid;
  place-items: center;
  width: 27px;
}

.controls .close {
  width: 44px;
  background: #c75050;
}

.controls svg {
  width: 12px;
  height: 12px;
}

.content {
  flex: 1;
  display: flex;
  flex-direction: column;
  background: #fff;
}

.tabs {
  display: flex;
  align-items: center;
  height: 24px;
  border-bottom: 1px solid #dcdfe3;
  box-sizing: border-box;
}

.tabs button {
  height: 24px;
  padding: 0 14px;
  color: #333;
}

.tabs .tab-file {
  width: 56px;
  background: #1a6fc4;
  color: #fff;
}

.tabs .on {
  padding: 0 13px;
  border: solid #dcdfe3;
  border-width: 0 1px;
  background: #f6f8fa;
}

.fold {
  width: 10px;
  margin: 0 10px 0 auto;
}

.tabs .help {
  width: 14px;
  height: 14px;
  margin-right: 4px;
  padding: 0;
  border-radius: 50%;
  background: #1a6fc4;
  color: #fff;
  font-weight: 700;
  line-height: 14px;
}

.ribbon {
  display: flex;
  height: 91px;
  background: #f6f8fa;
  border-bottom: 1px solid #dcdfe3;
}

.group {
  display: flex;
  flex-direction: column;
  justify-content: space-between;
  padding: 4px 9px 0 5px;
  border-right: 1px solid #e2e4e8;
}

.organize {
  padding: 4px 10px 0 3px;
}

.new {
  padding: 4px 7px 0 4px;
}

.open {
  padding: 4px 9px 0 6px;
}

.select {
  padding: 4px 9px 0 8px;
}

.tools {
  display: flex;
}

.caption {
  line-height: 18px;
  text-align: center;
  color: #8a8d92;
}

.big {
  display: flex;
  flex-direction: column;
  align-items: center;
  min-width: 42px;
  padding-top: 3px;
  line-height: 13px;
  color: #222;
}

.big svg {
  width: 32px;
  height: 32px;
  margin-bottom: 4px;
}

.big span {
  display: flex;
  align-items: center;
  min-height: 12px;
}

.off {
  color: #94979d;
}

.arr {
  margin-left: 5px;
  border: solid transparent;
  border-top-color: currentColor;
  border-width: 3px 3px 0;
}

.big .arr {
  margin-left: 2px;
}

.sep {
  width: 1px;
  height: 60px;
  margin: 4px 2px 0 5px;
  background: #dcdfe3;
}

.smalls {
  display: flex;
  flex-direction: column;
  margin-left: 4px;
}

.select .smalls {
  margin-left: 0;
}

.smalls button {
  display: flex;
  align-items: center;
  height: 22px;
  white-space: nowrap;
}

.smalls svg {
  width: 16px;
  height: 16px;
  margin-right: 3px;
}

.address-row {
  display: flex;
  align-items: center;
  height: 38px;
  padding: 0 12px 2px 9px;
  box-sizing: border-box;
}

.nav-btn {
  width: 20px;
  margin-right: 9px;
}

.recent {
  width: 8px;
  margin: 0 13px 0 1px;
}

.up {
  width: 12px;
  margin-right: 7px;
}

.address {
  flex: 12 0 0;
  display: flex;
  align-items: center;
  height: 22px;
  padding-left: 2px;
  border: 1px solid #d9d9d9;
  box-sizing: border-box;
  white-space: nowrap;
}

.chev {
  width: 8px;
  margin: 0 8px 0 5px;
}

.crumb-arrow {
  width: 4px;
  margin: 0 11px 0 10px;
}

.down {
  width: 10px;
  margin: 0 4px 0 auto;
}

.refresh {
  width: 25px;
  height: 20px;
  border-left: 1px solid #d9d9d9;
}

.refresh svg {
  width: 12px;
  margin: 0 auto;
}

.search {
  flex: 5 0 0;
  display: flex;
  align-items: center;
  height: 22px;
  margin-left: 12px;
  padding: 0 7px;
  border: 1px solid #d9d9d9;
  box-sizing: border-box;
}

.search input {
  flex: 1;
  min-width: 0;
  padding: 0;
  border: 0;
  outline: 0;
  font: inherit;
}

.search input::placeholder {
  color: #6d6d6d;
}

.search svg {
  width: 12px;
}

.panes {
  flex: 1;
  display: flex;
}

.tree {
  display: flex;
  flex-direction: column;
  width: 157px;
  padding-top: 8px;
  margin-right: 6px;
  flex: none;
}

.tree a {
  display: flex;
  align-items: center;
  gap: 5px;
  height: 21px;
  margin-left: 2px;
  padding-left: 18px;
  box-sizing: border-box;
}

.tree .child {
  padding-left: 28px;
}

.tree .gap {
  margin-top: 21px;
}

.tree .selected {
  border: 1px solid #dedede;
  padding-left: 27px;
  background: #f5f5f5;
}

.list {
  flex: 1;
  padding: 0 32px 0 6px;
  border-left: 1px solid #fafafa;
}

table {
  width: 100%;
  table-layout: fixed;
  border-collapse: collapse;
}

.c-mid {
  width: 120px;
}

.c-size {
  width: 80px;
}

th {
  position: relative;
  height: 20px;
  padding: 2px 6px;
  border-right: 1px solid #e8ebef;
  background-clip: padding-box;
  text-align: left;
  font-weight: 400;
  color: #4c607a;
}

th:first-child,
td:first-child {
  padding-left: 7px;
}

.sort {
  position: absolute;
  top: 1px;
  left: 49%;
  width: 6px;
}

tbody::before {
  content: '';
  display: block;
  height: 6px;
}

td {
  height: 21px;
  padding: 0 6px;
  color: #6d6d6d;
}

.file {
  display: flex;
  align-items: center;
  gap: 5px;
  padding-left: 2px;
  color: #111;
}

.file svg {
  width: 14px;
  height: 16px;
}

.size {
  padding-right: 7px;
  text-align: right;
}

.status {
  display: flex;
  align-items: center;
  height: 24px;
  padding: 0 4px 0 14px;
  color: #1e395b;
}

.status span {
  margin-right: auto;
}

.view {
  display: grid;
  place-items: center;
  width: 22px;
  height: 23px;
  box-sizing: border-box;
}

.view.on {
  border: 1px solid #66b0cc;
  background: #cbe8f6;
}

.view svg {
  width: 16px;
}

.cursor {
  position: absolute;
  left: 389px;
  top: 390px;
  width: 12px;
}

/* taskbar */
.taskbar {
  display: flex;
  align-items: stretch;
  gap: 4px;
  height: 40px;
  background: linear-gradient(90deg, #9b8088, #987d84 28%, #6b4a46 29%, #735450 50%, #6d4e4c 66%, #937880 68%, #9b8087);
  box-shadow: 0 -1px #e9dcdf;
}

.start {
  width: 48px;
}

.start svg {
  width: 28px;
  height: 28px;
  margin: 0 auto 0 10px;
}

.app {
  display: grid;
  place-items: center;
  width: 58px;
  height: 39px;
  margin-top: 1px;
  padding-bottom: 3px;
  border: 1px solid transparent;
}

.app svg {
  width: 30px;
  height: 30px;
}

.app.active {
  border-color: #f3e9eb;
  background: #cbbcc2;
}

.app.open {
  border-color: #b5a2a2;
  background: rgba(160, 135, 135, 0.45);
}

.tray {
  display: flex;
  align-items: center;
  gap: 8px;
  margin-left: auto;
}

.tray svg {
  width: 16px;
  height: 16px;
}

.tray svg:first-child {
  margin-right: 1px;
}

.clock {
  width: 78px;
  margin-right: 4px;
  padding-top: 5px;
  text-align: center;
  color: #fff;
}
</style>
